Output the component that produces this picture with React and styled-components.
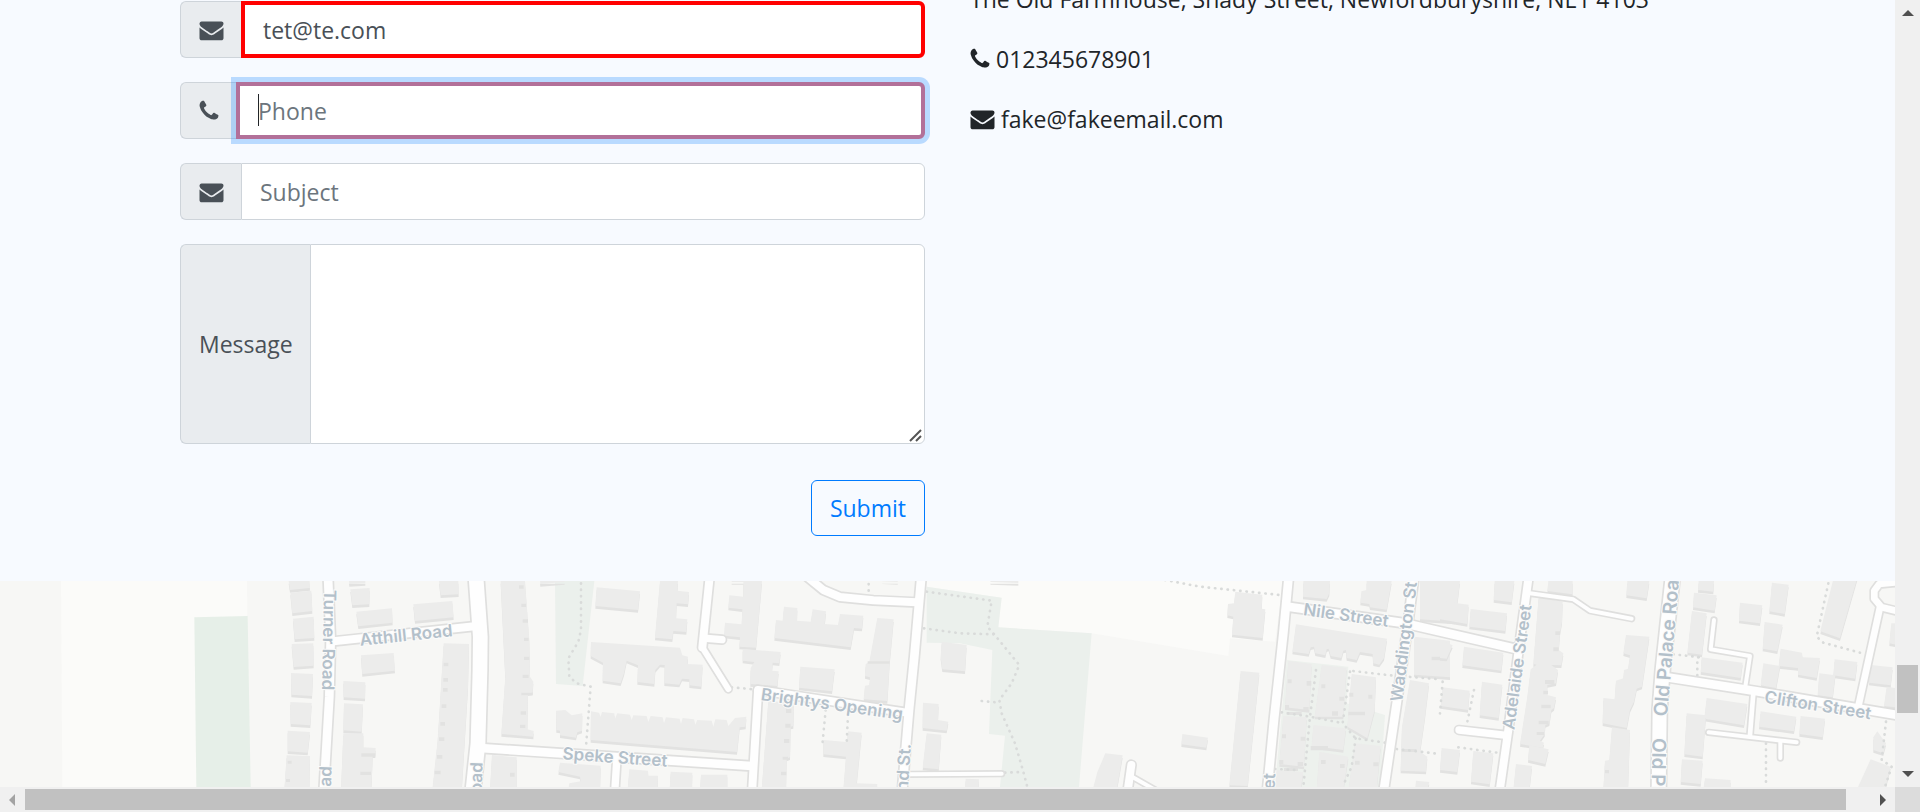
import React from 'react';
import styled, { createGlobalStyle, css } from 'styled-components';

const GlobalStyle = createGlobalStyle`
  *, *::before, *::after { box-sizing: border-box; }
  body {
    margin: 0;
    background: #f7faff;
    color: #212529;
    font-family: "Open Sans", "Noto Sans", sans-serif;
    font-size: 23px;
    line-height: 36px;
  }
`;

const Frame = styled.div`
  display: grid;
  grid-template-columns: minmax(0, 1fr) 25px;
  grid-template-rows: minmax(0, 1fr) 25px;
  height: 100vh;
`;

const Viewport = styled.main`
  display: flex;
  flex-direction: column;
  overflow: hidden;
`;

/* The page is scrolled, so the section begins above the visible area. */
const ContactSection = styled.section`
  display: grid;
  grid-template-columns: 1fr 1fr;
  gap: 45px;
  flex: none;
  margin-top: -19px;
  padding: 0 180px 45px;
`;

const Form = styled.form`
  display: flex;
  flex-direction: column;
  gap: 24px;
  padding-top: 20px;
`;

const Field = styled.div`
  display: flex;
  position: relative;
  min-height: 57px;
`;

const Addon = styled.label`
  display: flex;
  align-items: center;
  flex: none;
  padding: 0 17px 0 18px;
  border: 1px solid #ced4da;
  border-right: 0;
  border-radius: 6px 0 0 6px;
  background: #e9ecef;
  color: #495057;
`;

const control = css`
  flex: 1;
  min-width: 0;
  margin: 0;
  padding: 0 18px;
  border: 1px solid #ced4da;
  border-radius: 0 6px 6px 0;
  outline: 0;
  background: #fff;
  color: #495057;
  font: inherit;
  &::placeholder { color: #6c757d; opacity: 1; }
`;

const Input = styled.input`
  ${control}
  ${(p) => p.$state === 'invalid' && css`border: 4px solid #f00;`}
  ${(p) => p.$state === 'active' && css`
    position: relative;
    border: 4px solid #b27099;
    box-shadow: 0 0 0 5px rgba(0, 123, 255, 0.25);
  `}
`;

const InputWrap = styled.div`
  display: flex;
  flex: 1;
  position: relative;
`;

const Caret = styled.span`
  position: absolute;
  top: 12px;
  bottom: 13px;
  left: 22px;
  width: 1px;
  background: #212529;
`;

const Textarea = styled.textarea`
  ${control}
  height: 200px;
  resize: none;
`;

const Grip = styled.svg`
  position: absolute;
  right: 2px;
  bottom: 2px;
  stroke: #555;
  stroke-width: 2px;
`;

const Submit = styled.button`
  align-self: flex-end;
  height: 56px;
  margin-top: 12px;
  padding: 0 18px;
  border: 1px solid #007bff;
  border-radius: 6px;
  background: transparent;
  color: #007bff;
  font: inherit;
`;

const Details = styled.address`
  display: flex;
  flex-direction: column;
  gap: 24px;
  font-style: normal;
`;

const Line = styled.p`
  display: flex;
  align-items: center;
  gap: 6px;
  margin: 0;
  white-space: nowrap;
`;

const Icon = styled.svg`
  display: block;
  flex: none;
  fill: currentColor;
`;

const EnvelopeIcon = () => (
  <Icon width="25" height="24" viewBox="0 0 1792 1792" aria-hidden="true">
    <path d="M1792 710v794q0 66-47 113t-113 47h-1472q-66 0-113-47t-47-113v-794q44 49 101 87 362 246 497 345 57 42 92.5 65.5t94.5 48 110 24.5h2q51 0 110-24.5t94.5-48 92.5-65.5q170-123 498-345 57-39 100-87zm0-294q0 79-49 151t-122 123q-376 261-468 325-10 7-42.5 31t-54 38.5-52 32.5-57.5 27-50 9h-2q-23 0-50-9t-57.5-27-52-32.5-54-38.5-42.5-31q-91-64-262-182.5t-205-142.5q-62-42-117-115.5t-55-136.5q0-78 41.5-130t118.5-52h1472q65 0 112.5 47t47.5 113z" />
  </Icon>
);

const PhoneIcon = () => (
  <Icon width="20" height="24" viewBox="192 0 1408 1792" aria-hidden="true">
    <path d="M1600 1240q0 27-10 70.5t-21 68.5q-21 50-122 106-94 51-186 51-27 0-53-3.5t-57.5-12.5-47-14.5-55.5-20.5-49-18q-98-35-175-83-127-79-264-216t-216-264q-48-77-83-175-3-9-18-49t-20.5-55.5-14.5-47-12.5-57.5-3.5-53q0-92 51-186 56-101 106-122 25-11 68.5-21t70.5-10q14 0 21 3 18 6 53 76 11 19 30 54t35 63.5 31 53.5q3 4 17.5 25t21.5 35.5 7 28.5q0 20-28.5 50t-62 55-62 53-28.5 46q0 9 5 22.5t8.5 20.5 14 24 11.5 19q76 137 174 235t235 174q2 1 19 11.5t24 14 20.5 8.5 22.5 5q18 0 46-28.5t53-62 55-62 50-28.5q14 0 28.5 7t35.5 21.5 25 17.5q25 15 53.5 31t63.5 35 54 30q70 35 76 53 3 7 3 21z" />
  </Icon>
);

/* ---------- Map ---------- */

const MapPane = styled.div`
  flex: 1;
  min-height: 0;
  background: #f7f7f5;
  svg { display: block; width: 100%; height: 100%; }
`;

const MapLabel = styled.text`
  fill: #b3c0ca;
  stroke: #fbfbfa;
  stroke-width: 2px;
  paint-order: stroke;
  text-anchor: ${(p) => p.$anchor || 'middle'};
  dominant-baseline: central;
  font-family: Inter, sans-serif;
  font-size: ${(p) => (p.$major ? 19 : 17)}px;
  font-weight: 600;
`;

// Each tile covers 480px of the map, drawn at three units to the pixel.
const TILE = 1440;

const areas = [
  [0, '#fbfbf9', '183,33 741,33 745,651 187,651'],
  [0, '#e6efe8', '583,142 743,138 752,651 589,651'],
  [1, '#ebf0ec', '225,33 343,33 308,348 228,342'],
  [2, '#fbfbf9', '-100,33 970,33 945,215 810,205 805,258 395,190 115,172 125,83 -100,50'],
  [2, '#ebf0ec', '-100,50 125,83 115,172 395,190 357,651 120,651 135,497 87,492 97,240 0,220 -100,218'],
  [2, '#edf1ed', '980,270 1165,290 1160,400 1275,435 1260,651 945,651'],
];

const roads = [
  [0, 26, '984,20 992,210 988,380 971,670'],
  [0, 24, '1000,214 1430,168'],
  [0, 44, '1428,20 1441,200 1440,300 1434,520 1418,670'],
  [1, 26, '0,534 815,588'],
  [1, 22, '410,575 404,670'],
  [1, 24, '834,366 816,670'],
  [1, 24, '834,360 1280,428'],
  [1, 24, '689,20 667,232'],
  [1, 18, '667,232 745,357'],
  [1, 22, '680,205 726,209'],
  [1, 24, '975,15 1030,60 1080,81 1180,91 1310,97'],
  [1, 26, '1324,20 1303,260 1287,420 1266,670'],
  [1, 12, '1290,613 1565,611'],
  [2, 26, '986,20 970,190 942,450 921,670'],
  [2, 26, '990,111 1330,159 1665,236'],
  [2, 26, '1362,20 1340,190 1310,400 1270,670'],
  [2, 24, '514,585 502,670'],
  [2, 12, '516,620 600,668'],
  [3, 24, '266,20 240,210 205,480 178,670'],
  [3, 12, '270,70 400,88 450,122 575,146'],
  [3, 22, '57,480 200,496'],
  [3, 42, '698,20 668,300 659,420 656,670'],
  [3, 26, '690,323 950,364 1260,416 1450,448'],
  [3, 12, '822,150 812,238 930,258 916,350'],
  [3, 14, '940,370 930,495'],
  [3, 12, '806,487 1070,517'],
  [3, 12, '1021,515 1021,564'],
  [3, 20, '1320,112 1256,405'],
  [3, 20, '1400,130 1325,112 1303,86 1303,62 1318,42 1400,34'],
];

const paths = [
  [1, '303,40 303,180 295,215 265,265 268,320 290,340 332,350 318,530'],
  [1, '755,352 822,358'],
  [1, '1166,42 1166,80'],
  [1, '1037,420 1027,525'],
  [1, '1104,435 1100,520'],
  [1, '1340,65 1535,92 1522,170 1542,192 1618,285 1595,340 1558,390 1565,430 1605,520 1630,605 1642,651'],
  [1, '1332,175 1440,190 1540,193'],
  [2, '65,393 118,398'],
  [2, '135,608 190,606'],
  [2, '615,30 720,50 960,75'],
  [2, '1068,300 1050,440 1030,651'],
  [2, '1170,305 1148,460 1187,505 1275,518'],
  [2, '1187,505 1175,590 1150,645'],
  [2, '965,427 1050,440 1150,460'],
  [2, '1180,303 1290,316 1440,328'],
  [2, '1310,537 1440,552'],
  [2, '945,597 1015,600'],
  [3, '1165,40 1130,200 1150,218 1260,248'],
  [3, '700,253 785,262 772,262 772,320'],
  [3, '978,520 978,651'],
  [3, '1338,455 1325,570 1355,590 1335,651'],
  [3, '55,532 172,548'],
  [3, '102,360 80,465'],
  [3, '8,335 0,430'],
];

const buildings = [
  [0, '866,33 929,33 930,54 870,60'],
  [0, '871,68 934,62 937,123 877,130'],
  [0, '879,146 941,140 943,204 884,208'],
  [0, '875,222 940,220 941,287 881,291'],
  [0, '873,309 939,312 936,378 874,374'],
  [0, '871,396 935,399 931,466 872,462'],
  [0, '863,482 930,486 923,548 863,544'],
  [0, '860,556 930,558 928,660 853,660'],
  [0, '1047,33 1096,33 1096,39 1048,42'],
  [0, '1051,58 1109,54 1108,103 1057,106'],
  [0, '1069,125 1176,115 1178,158 1075,169'],
  [0, '1240,103 1357,93 1361,142 1245,153'],
  [0, '1317,33 1375,33 1376,73 1322,76'],
  [0, '1083,256 1181,249 1185,302 1087,312'],
  [0, '1030,333 1096,337 1095,386 1031,382'],
  [0, '1032,400 1089,403 1085,485 1030,481'],
  [0, '1030,490 1090,490 1090,532 1127,534 1126,556 1118,556 1114,660 1023,660'],
  [0, '1331,220 1407,222 1404,350 1385,660 1297,660 1313,510 1320,400'],
  [1, '62,33 135,33 148,210 150,320 160,335 158,368 144,370 142,478 161,483 160,500 64,492 76,320'],
  [1, '180,33 254,33 254,36 181,42'],
  [1, '350,52 480,64 474,120 346,108'],
  [1, '540,33 594,33 592,62 627,66 624,103 590,100 588,145 622,148 619,186 580,183 577,208 525,203'],
  [1, '755,33 846,33 828,233 778,230 780,202 733,197 735,158 785,163 787,118 745,113 748,76 790,80 790,36 755,36'],
  [1, '333,216 600,233 607,256 624,260 622,282 668,284 664,350 628,346 628,328 606,326 598,344 553,340 554,285 540,284 526,300 523,342 472,336 474,286 440,272 432,310 422,340 368,332 369,278 332,258'],
  [1, '912,110 952,114 951,152 992,155 998,118 1038,124 1034,162 1074,165 1080,132 1150,137 1146,176 1122,174 1112,232 883,204 888,150 908,152'],
  [1, '1192,144 1241,148 1229,276 1222,393 1151,388 1155,347 1168,345 1170,322 1155,318 1157,282 1168,276'],
  [1, '788,237 902,246 898,280 878,278 876,302 896,304 892,348 811,342 812,294 823,276 788,272'],
  [1, '961,290 1064,298 1056,364 957,353'],
  [1, '228,422 256,420 275,436 307,430 306,482 292,487 288,503 240,496 240,482 229,480'],
  [1, '333,424 357,428 362,440 366,426 403,430 405,446 412,430 450,434 455,450 460,436 500,438 505,456 512,438 548,442 552,460 558,442 599,446 603,462 608,444 642,448 646,464 652,450 695,452 700,470 706,448 740,450 745,468 765,444 799,440 797,470 779,472 771,546 332,510'],
  [1, '36,555 110,562 110,660 30,660'],
  [1, '240,578 362,587 360,660 265,660 268,640 302,634 300,620 235,606'],
  [1, '448,598 504,602 505,617 534,617 533,660 443,660'],
  [1, '572,605 637,608 636,660 569,660'],
  [1, '663,614 742,614 742,660 660,660'],
  [1, '865,392 942,400 940,468 932,470 930,562 920,566 918,660 845,660'],
  [1, '1030,510 1100,516 1104,484 1145,488 1130,640 1192,642 1190,660 1090,660 1098,560 1030,553'],
  [1, '1329,398 1376,402 1374,450 1405,455 1400,482 1328,474'],
  [1, '1340,490 1384,494 1376,598 1328,593'],
  [1, '1206,33 1253,33 1253,36 1208,34'],
  [1, '1385,215 1460,225 1455,304 1387,298 1382,262'],
  [2, '91,33 175,33 175,39 92,36'],
  [2, '826,65 907,74 905,116 916,118 908,204 816,194 820,140 802,136 804,102 822,100'],
  [2, '842,303 898,308 863,648 808,646'],
  [2, '667,492 744,503 739,533 664,523'],
  [2, '436,550 488,556 470,660 398,660 412,606'],
  [2, '17,626 57,628 56,660 15,660'],
  [2, '1030,33 1110,33 1108,70 1100,87 1029,80'],
  [2, '1220,33 1295,33 1280,119 1230,112 1228,102 1201,98 1204,64 1220,60'],
  [2, '1380,33 1500,33 1485,155 1380,148'],
  [2, '1008,163 1281,206 1272,264 1258,284 1240,280 1238,252 1200,246 1190,270 1160,264 1158,240 1150,242 1144,264 1112,258 1106,236 1100,238 1096,256 1066,250 1062,230 1052,232 1046,252 997,245'],
  [2, '985,272 1055,282 1048,420 975,412'],
  [2, '1085,285 1160,293 1150,440 1064,440'],
  [2, '1175,312 1248,322 1244,420 1222,505 1180,480 1162,470'],
  [2, '970,438 1040,442 1032,590 958,582'],
  [2, '1060,465 1158,475 1150,540 1055,528'],
  [2, '1078,545 1165,560 1150,660 1070,660'],
  [2, '1185,520 1262,528 1250,660 1165,660'],
  [2, '950,600 1030,606 1022,660 945,660'],
  [2, '1362,200 1470,212 1470,322 1362,314'],
  [2, '1350,330 1407,340 1395,440 1380,545 1402,560 1398,605 1322,602 1326,470'],
  [2, '1368,632 1408,636 1402,660 1366,660'],
  [3, '164,33 223,33 215,97 161,90'],
  [3, '0,93 86,104 82,162 0,148'],
  [3, '92,117 201,130 196,183 88,170'],
  [3, '0,210 38,226 20,266 0,264'],
  [3, '72,230 190,248 184,302 67,286'],
  [3, '8,352 89,362 84,420 2,408'],
  [3, '126,335 187,344 176,444 119,436'],
  [3, '5,534 60,540 52,606 0,600'],
  [3, '100,543 160,550 149,643 93,635'],
  [3, '296,80 368,95 366,155 360,190 356,240 370,250 364,286 334,285 354,300 348,340 322,345 322,375 348,382 342,414 334,420 328,460 316,465 314,492 300,512 312,518 308,534 240,522 262,380 272,298 290,284 280,282'],
  [3, '268,526 326,538 316,582 264,570'],
  [3, '228,582 276,588 268,660 220,660'],
  [3, '325,33 398,33 398,73 322,63'],
  [3, '562,33 628,33 620,85 559,76'],
  [3, '558,195 628,200 606,350 590,356 582,395 570,420 560,474 488,460 490,384 524,388 528,332 550,325 552,300 564,296 570,256 550,250'],
  [3, '516,472 570,480 564,660 490,660 495,572 508,570'],
  [3, '776,33 822,33 820,65 774,60'],
  [3, '762,68 830,76 824,122 759,112'],
  [3, '756,123 800,130 786,254 742,248'],
  [3, '785,262 908,278 902,324 782,306'],
  [3, '900,98 967,106 960,160 897,152'],
  [3, '996,38 1046,44 1034,132 988,124'],
  [3, '974,156 1028,164 1012,244 968,236'],
  [3, '1022,236 1086,248 1088,262 1140,264 1130,324 1074,314 1074,294 1016,288'],
  [3, '970,280 1020,288 1008,354 962,346'],
  [3, '1184,268 1252,276 1246,326 1180,316'],
  [3, '1138,310 1186,316 1178,382 1133,376'],
  [3, '1182,20 1253,20 1200,205 1141,184'],
  [3, '1292,285 1358,292 1352,346 1287,338'],
  [3, '1354,160 1400,160 1400,230 1348,220'],
  [3, '1340,350 1400,360 1400,415 1332,408'],
  [3, '800,384 922,402 912,466 793,446'],
  [3, '740,430 798,436 788,560 733,553'],
  [3, '726,568 788,572 782,642 722,636'],
  [3, '795,625 872,630 870,660 790,660'],
  [3, '962,424 1069,440 1062,484 957,470'],
  [3, '1082,438 1155,446 1148,502 1078,492'],
  [3, '1312,484 1338,520 1330,550 1300,540 1300,502'],
  [3, '1292,568 1352,590 1335,660 1250,660'],
];

const details = [
  [0, '863,572h12v9h-12z 858,627h12v9h-12z 1084,550h42v10h-42z 1081,605h32v10h-32z 1331,278h14v11h-14z 1330,324h14v11h-14z 1329,354h14v11h-14z 1325,403h14v11h-14z 1321,456h14v11h-14z 1317,502h16v11h-16z 1311,555h16v11h-16z 1304,602h18v11h-18z'],
  [1, '117,46h14v10h-14z 124,101h14v10h-14z 128,148h16v10h-16z 132,203h14v10h-14z 132,260h16v10h-16z 128,314h18v10h-18z 124,368h34v8h-34z 122,424h16v10h-16z 120,464h16v10h-16z 90,608h14v12h-14z 918,417h16v12h-16z 916,461h16v12h-16z 912,507h16v12h-16z 908,560h16v9h-16z 903,605h16v11h-16z 1163,274h66v7h-66z'],
  [2, '983,328h12v12h-12z 1040,333h14v14h-14z 1084,343h12v12h-12z 975,405h12v12h-12z 1030,411h16v12h-16z 1168,368h12v12h-12z 1225,374h12v12h-12z 1138,380h14v12h-14z 1116,424h18v13h-18z 1165,425h50v11h-50z 966,493h12v12h-12z 1022,500h14v12h-14z 958,570h12v12h-12z 1013,576h16v12h-16z 1083,570h14v12h-14z 1140,582h14v12h-14z 1185,572h14v12h-14z 1240,577h16v12h-16z 1052,528h52v13h-52z 980,426h45v9h-45z 972,594h42v9h-42z 1325,537h45v9h-45z 1415,260h25v11h-25z'],
  [3, '346,184h14v11h-14z 340,232h16v12h-16z 315,330h28v12h-28z 310,362h14v11h-14z 304,404h28v11h-28z 296,452h30v11h-30z 290,486h22v9h-22z 495,600h12v10h-12z'],
];

const labels = [
  { x: 329, y: 59, angle: 91, text: 'Turner Road' },
  { x: 406, y: 54, angle: -6, text: 'Atthill Road' },
  { x: 325, y: 206, angle: -88, text: 'Road' },
  { x: 476, y: 202, angle: -88, text: 'Road' },
  { x: 615, y: 176, angle: 4, text: 'Speke Street' },
  { x: 832, y: 123, angle: 8, text: 'Brightys Opening' },
  { x: 903, y: 191, angle: -86, text: 'and St.' },
  { x: 1346, y: 34, angle: 8, text: 'Nile Street' },
  { x: 1404, y: 58, angle: -83, text: 'Waddington St.' },
  { x: 1268, y: 217, angle: -87, text: 'Street' },
  { x: 1517, y: 86, angle: -82, text: 'Adelaide Street' },
  { x: 1667, y: 61, angle: -85, text: 'Old Palace Road', major: true },
  { x: 1659, y: 157, angle: 91, text: 'Old Palace Road', major: true, anchor: 'start' },
  { x: 1818, y: 124, angle: 9, text: 'Clifton Street' },
];

const Tile = ({ index, children }) => (
  <g transform={`translate(${index * TILE} 0)`}>{children}</g>
);

const StreetMap = () => (
  <svg viewBox="0 0 1895 206" preserveAspectRatio="xMidYMin slice" role="img" aria-label="Street map">
    <g transform="translate(0 -11) scale(0.33333)" strokeLinejoin="round" strokeLinecap="round" fill="none">
      {areas.map(([t, fill, points]) => (
        <Tile key={points} index={t}><polygon points={points} fill={fill} /></Tile>
      ))}
      {buildings.map(([t, points]) => (
        <Tile key={points} index={t}>
          <polygon points={points} fill="#e2e2e1" transform="translate(0 8)" />
          <polygon points={points} fill="#ececeb" />
        </Tile>
      ))}
      {details.map(([t, d]) => (
        <Tile key={t} index={t}><path d={d.replace(/(^| )/g, '$1M')} fill="#e2e2e1" /></Tile>
      ))}
      {paths.map(([t, points]) => (
        <Tile key={points} index={t}>
          <polyline points={points} stroke="#d9dbda" strokeWidth="8" strokeDasharray="1 18" />
        </Tile>
      ))}
      {roads.map(([t, w, points]) => (
        <Tile key={points} index={t}><polyline points={points} stroke="#dfdfde" strokeWidth={w + 10} /></Tile>
      ))}
      {roads.map(([t, w, points]) => (
        <Tile key={points} index={t}><polyline points={points} stroke="#fefefe" strokeWidth={w} /></Tile>
      ))}
    </g>
    {labels.map(({ x, y, angle, text, major, anchor }) => (
      <MapLabel
        key={`${x}-${text}`}
        $major={major}
        $anchor={anchor}
        transform={`translate(${x} ${y}) rotate(${angle})`}
      >
        {text}
      </MapLabel>
    ))}
  </svg>
);

/* ---------- Scrollbars ---------- */

const Scrollbar = styled.div`
  display: flex;
  flex-direction: ${(p) => (p.$vertical ? 'column' : 'row')};
  justify-content: space-between;
  align-items: center;
  padding: ${(p) => (p.$vertical ? '9px 2px' : '2px 9px')};
  background: #f0f0f0;
`;

const Track = styled.div`
  display: flex;
  flex: 1;
  flex-direction: ${(p) => (p.$vertical ? 'column' : 'row')};
  align-self: stretch;
  margin: ${(p) => (p.$vertical ? '12px 0' : '0 10px')};
`;

const Space = styled.div`
  flex: ${(p) => p.$grow} 0 0;
`;

const Thumb = styled.div`
  flex: ${(p) => p.$grow} 0 0;
  background: #c1c1c1;
`;

const Corner = styled.div`
  background: #dcdcdc;
`;

const arrows = {
  up: [12, 8, '0,7 6,1 12,7'],
  down: [12, 8, '0,1 12,1 6,7'],
  left: [6, 12, '6,0 0,6 6,12'],
  right: [6, 12, '0,0 6,6 0,12'],
};

const Arrow = ({ direction, color = '#505050' }) => {
  const [w, h, points] = arrows[direction];
  return (
    <Icon width={w} height={h} viewBox={`0 0 ${w} ${h}`} aria-hidden="true">
      <polygon points={points} fill={color} />
    </Icon>
  );
};

export default function App() {
  return (
    <>
      <GlobalStyle />
      <Frame>
        <Viewport>
          <ContactSection>
            <Form onSubmit={(e) => e.preventDefault()}>
              <Field>
                <Addon htmlFor="email" aria-label="Email"><EnvelopeIcon /></Addon>
                <Input id="email" type="email" defaultValue="tet@te.com" $state="invalid" />
              </Field>
              <Field>
                <Addon htmlFor="phone" aria-label="Phone"><PhoneIcon /></Addon>
                <InputWrap>
                  <Input id="phone" type="tel" placeholder="Phone" $state="active" />
                  <Caret />
                </InputWrap>
              </Field>
              <Field>
                <Addon htmlFor="subject" aria-label="Subject"><EnvelopeIcon /></Addon>
                <Input id="subject" type="text" placeholder="Subject" />
              </Field>
              <Field>
                <Addon htmlFor="message">Message</Addon>
                <Textarea id="message" />
                <Grip width="14" height="14" viewBox="0 0 14 14" aria-hidden="true">
                  <path d="M1 13L12 2M7 13l5-5" />
                </Grip>
              </Field>
              <Submit type="submit">Submit</Submit>
            </Form>
            <Details>
              <Line>The Old Farmhouse, Shady Street, Newfordburyshire, NE1 4103</Line>
              <Line><PhoneIcon />012345678901</Line>
              <Line><EnvelopeIcon />fake@fakeemail.com</Line>
            </Details>
          </ContactSection>
          <MapPane><StreetMap /></MapPane>
        </Viewport>
        <Scrollbar $vertical>
          <Arrow direction="up" />
          <Track $vertical>
            <Space $grow={636} />
            <Thumb $grow={48} />
            <Space $grow={45} />
          </Track>
          <Arrow direction="down" />
        </Scrollbar>
        <Scrollbar>
          <Arrow direction="left" color="#a3a3a3" />
          <Track>
            <Thumb $grow={1821} />
            <Space $grow={24} />
          </Track>
          <Arrow direction="right" />
        </Scrollbar>
        <Corner />
      </Frame>
    </>
  );
}
